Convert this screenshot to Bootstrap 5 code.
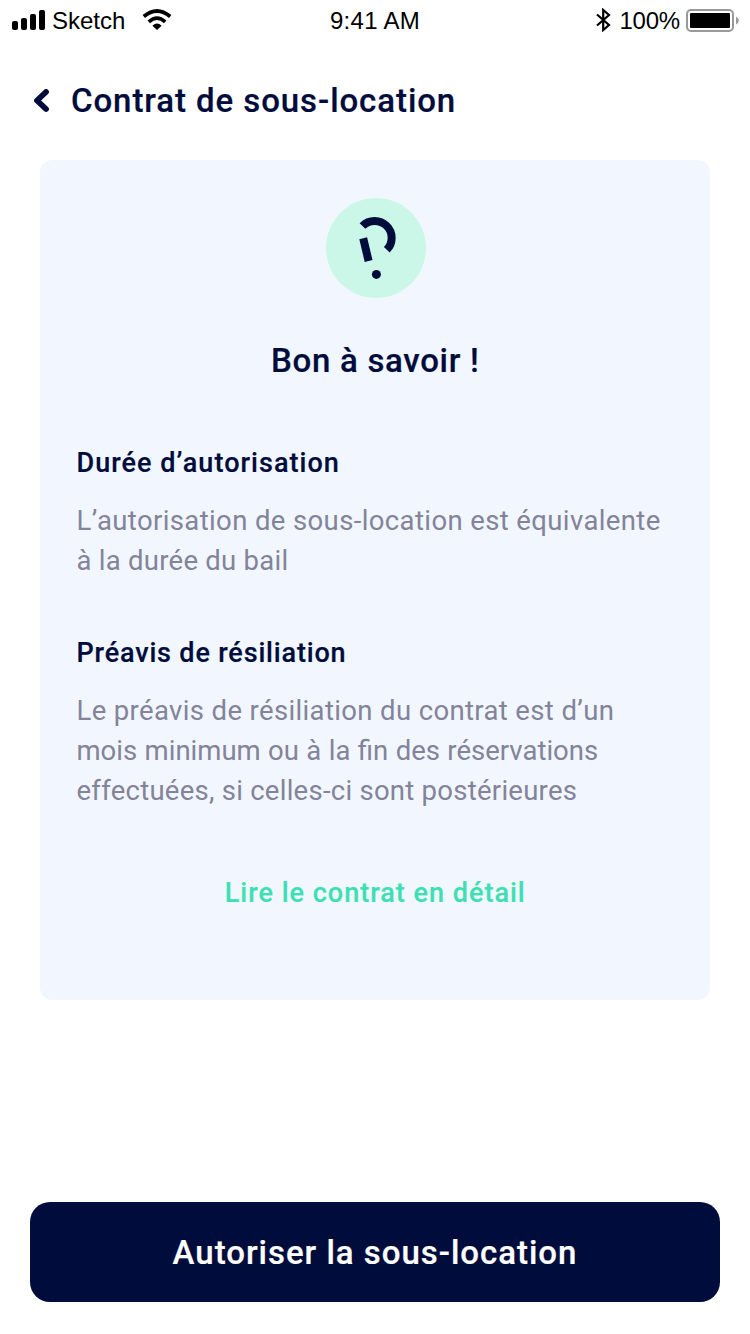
<!DOCTYPE html>
<html lang="fr">
<head>
<meta charset="utf-8">
<meta name="viewport" content="width=device-width, initial-scale=1">
<title>Contrat de sous-location</title>
<link href="https://cdn.jsdelivr.net/npm/bootstrap@5.3.0/dist/css/bootstrap.min.css" rel="stylesheet">
<style>
  :root { --ink: #000c3b; --muted-ink: #83839a; --mint: #3fdfb4; --panel: #f2f7ff; }
  body { font-family: Roboto, sans-serif; color: var(--ink); font-weight: 500; }
  .screen { width: 750px; height: 1334px; }
  .status { height: 40px; padding: 0 11px 0 12px; font: 24px/40px "Liberation Sans", sans-serif; color: #000; }
  .status .side { width: 290px; }
  .status span { padding-top: 2px; }
  .status .clock { letter-spacing: .3px; margin-right: 1px; }
  .status .carrier { margin-left: 7px; }
  .status .level { margin: 0 6px 0 8px; letter-spacing: -.2px; }
  .wifi { margin-left: 17px; }
  .topbar { height: 120px; padding: 2px 0 0 33px; }
  .title-text { font-size: 33px; line-height: 40px; letter-spacing: .92px; }
  .title-text, .sub, .read-link { -webkit-text-stroke: .2px currentColor; }
  .topbar .title-text { margin-left: 20px; }
  .info-panel { width: 670px; height: 840px; margin-left: 40px; padding: 38px 36px 0 36.5px; border-radius: 12px; background: var(--panel); }
  .help-mark { width: 102px; height: 100px; }
  .panel-title { margin: 43px 0 62px; letter-spacing: .7px; }
  .sub { margin: 0 0 18px; font-size: 27px; line-height: 40px; letter-spacing: 1.04px; }
  .sub-tight { letter-spacing: .83px; }
  .body-copy { margin: 0 0 52px; font-size: 27.5px; line-height: 40px; font-weight: 400; color: var(--muted-ink); letter-spacing: .38px; }
  .body-copy.last-copy { margin-bottom: 62px; letter-spacing: .36px; }
  .body-copy .even { letter-spacing: 0; word-spacing: .6px; }
  .body-copy .snug { letter-spacing: .26px; }
  .read-link { font-size: 27px; line-height: 40px; letter-spacing: 1px; color: var(--mint); }
  .cta { height: 100px; margin: 0 30px 32px; padding: 2px 0 0; border: 0; border-radius: 20px; background: var(--ink); font-weight: 500; letter-spacing: .98px; }
  .cta:hover { background: #0a1a56; }
</style>
</head>
<body class="bg-white overflow-hidden">
<div class="screen d-flex flex-column">
  <div class="status d-flex justify-content-between align-items-center">
    <div class="side d-flex align-items-center">
      <svg width="33" height="20" viewBox="0 0 33 20"><rect y="11" width="6" height="9" rx="2"/><rect x="9" y="8" width="6" height="12" rx="2"/><rect x="18" y="4" width="6" height="16" rx="2"/><rect x="27" width="6" height="20" rx="2"/></svg>
      <span class="carrier">Sketch</span>
      <svg class="wifi" width="30" height="22" viewBox="0 0 30 22" fill="none" stroke="#000"><path d="M1.8 7.5Q15-3.5 28.2 7.5" stroke-width="3.8"/><path d="M6.8 12.9Q15 5.5 23.2 12.9" stroke-width="3.6"/><path d="M10.4 16.7Q15 12.5 19.6 16.7L15 21Z" fill="#000" stroke="none"/></svg>
    </div>
    <span class="clock">9:41 AM</span>
    <div class="side d-flex align-items-center justify-content-end">
      <svg width="15" height="24" viewBox="0 0 15 24" fill="none" stroke="#000" stroke-width="2.2"><path d="M1 6.5 13 17 7.2 22V2L13 7 1 17.5"/></svg>
      <span class="level">100%</span>
      <svg width="53" height="24" viewBox="0 0 53 24"><rect x="1" y="2" width="46" height="21" rx="4" fill="none" stroke="#999" stroke-width="2"/><rect x="4" y="5" width="40" height="15" rx="1"/><path d="M50 8.5Q55.5 12.5 50 16.5Z" fill="#999"/></svg>
    </div>
  </div>
  <header class="topbar d-flex align-items-center">
    <svg width="18" height="24" viewBox="0 0 18 24" fill="none" stroke="#000c3b" stroke-width="5.8" stroke-linecap="round" stroke-linejoin="round"><path d="M13 3 4 11.5 13 20"/></svg>
    <h1 class="title-text mb-0">Contrat de sous-location</h1>
  </header>
  <main class="info-panel">
    <div class="text-center">
      <svg class="help-mark d-block mx-auto" viewBox="0 0 102 100"><g transform="translate(2 0)"><circle cx="50" cy="50" r="50" fill="#cbf7e8"/><g fill="none" stroke="#000c3b" stroke-width="8"><path d="M36.5 28A16.5 16.5 0 1 1 60.8 51.8"/><path d="M37.2 40.3 42.6 63"/></g><circle cx="50.4" cy="76.4" r="4.5" fill="#000c3b"/></g></svg>
      <h2 class="title-text panel-title">Bon à savoir !</h2>
    </div>
    <h3 class="sub">Durée d’autorisation</h3>
    <p class="body-copy">L’autorisation de sous-location est équivalente<br><span class="snug">à la durée du bail</span></p>
    <h3 class="sub sub-tight">Préavis de résiliation</h3>
    <p class="body-copy last-copy">Le préavis de résiliation du contrat est d’un<br><span class="even">mois minimum ou à la fin des réservations</span><br><span class="snug">effectuées, si celles-ci sont postérieures</span></p>
    <a class="read-link d-block text-center text-decoration-none" href="#">Lire le contrat en détail</a>
  </main>
  <button type="button" class="cta btn btn-primary mt-auto title-text">Autoriser la sous-location</button>
</div>
<script src="https://cdn.jsdelivr.net/npm/bootstrap@5.3.0/dist/js/bootstrap.bundle.min.js"></script>
</body>
</html>
